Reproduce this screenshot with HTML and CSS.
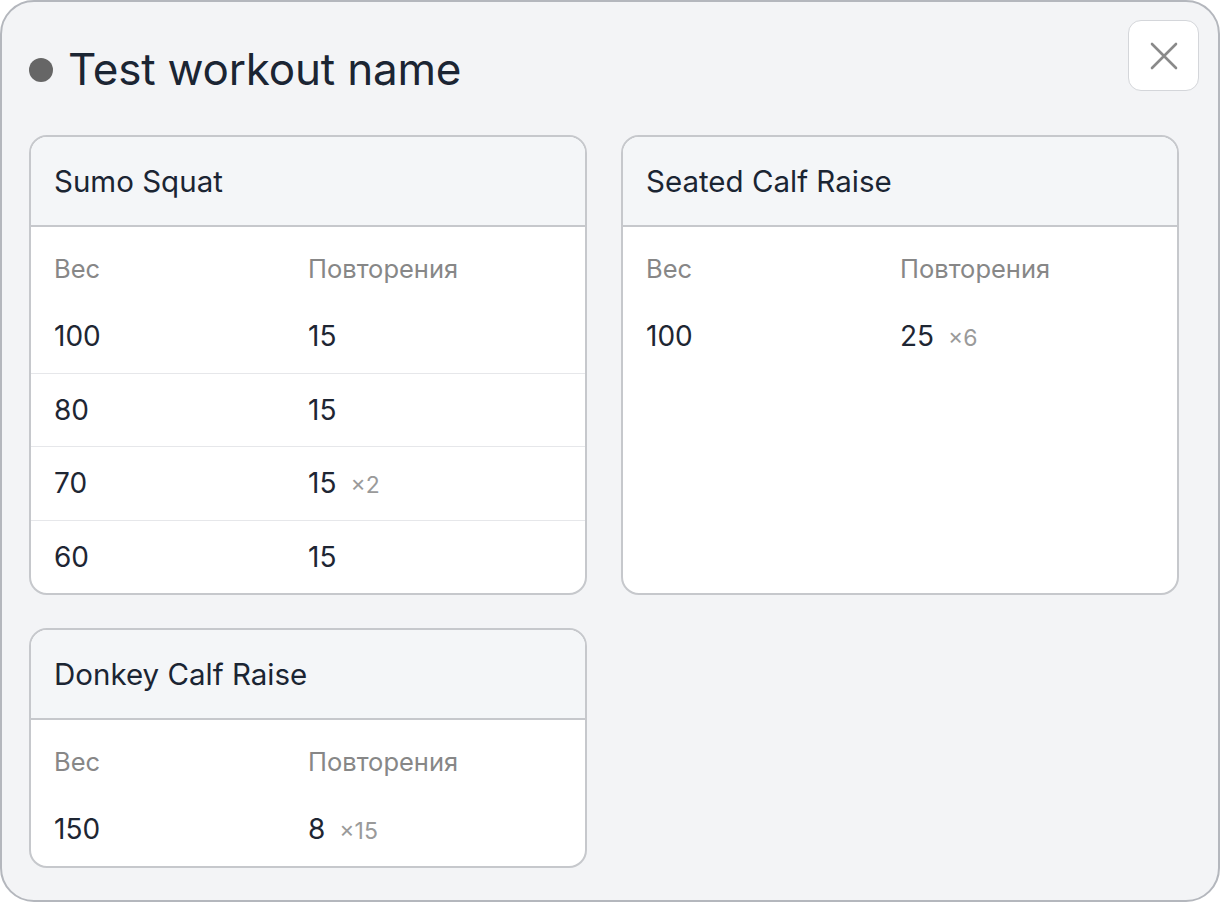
FILE: index.html
```html
<!DOCTYPE html>
<html lang="ru">
<head>
<meta charset="utf-8">
<title>Test workout name</title>
<link rel="stylesheet" href="styles.css">
</head>
<body>
<div class="modal">
  <div class="modal-head">
    <h1 class="title"><span class="dot"></span>Test workout name</h1>
    <button class="close" aria-label="Закрыть">
      <svg width="28" height="28" viewBox="0 0 28 28"><path d="M2 2 L26 26 M26 2 L2 26" stroke="#8a8a8a" stroke-width="2.6" stroke-linecap="round" fill="none"/></svg>
    </button>
  </div>
  <div class="grid">
    <section class="card">
      <div class="card-head">Sumo Squat</div>
      <div class="row row-head"><span>Вес</span><span>Повторения</span></div>
      <div class="row"><span>100</span><span>15</span></div>
      <div class="row"><span>80</span><span>15</span></div>
      <div class="row"><span>70</span><span>15<em class="mult">×2</em></span></div>
      <div class="row"><span>60</span><span>15</span></div>
    </section>
    <section class="card">
      <div class="card-head">Seated Calf Raise</div>
      <div class="row row-head"><span>Вес</span><span>Повторения</span></div>
      <div class="row"><span>100</span><span>25<em class="mult">×6</em></span></div>
    </section>
    <section class="card">
      <div class="card-head">Donkey Calf Raise</div>
      <div class="row row-head"><span>Вес</span><span>Повторения</span></div>
      <div class="row"><span>150</span><span>8<em class="mult">×15</em></span></div>
    </section>
  </div>
</div>
</body>
</html>
```

FILE: styles.css
```css
html, body {
  margin: 0;
  padding: 0;
  background: #ffffff;
}
body {
  font-family: Inter, "Noto Sans", sans-serif;
  color: #1b2533;
}
.modal {
  box-sizing: border-box;
  width: 1220px;
  height: 902px;
  background: #f3f4f6;
  border: 2px solid #b4b7bd;
  border-radius: 34px;
  padding: 18px 19px 0 27px;
}
.modal-head {
  display: flex;
  justify-content: space-between;
  align-items: flex-start;
  height: 115px;
}
.title {
  margin: 25px 0 0 0;
  display: flex;
  align-items: center;
  font-size: 44px;
  font-weight: 400;
  letter-spacing: -0.2px;
  line-height: 48px;
  color: #1b2533;
}
.dot {
  width: 24px;
  height: 24px;
  border-radius: 50%;
  background: #666666;
  margin-right: 15px;
  margin-top: 2px;
}
.close {
  box-sizing: border-box;
  width: 71px;
  height: 71px;
  border-radius: 13px;
  border: 1.5px solid #d4d6da;
  background: #ffffff;
  display: flex;
  align-items: center;
  justify-content: center;
  padding: 0;
}
.grid {
  display: grid;
  grid-template-columns: 558px 558px;
  column-gap: 34px;
  row-gap: 33px;
  align-items: stretch;
}
.card {
  box-sizing: border-box;
  background: #ffffff;
  border: 2px solid #c6c8cc;
  border-radius: 18px;
  overflow: hidden;
}
.card-head {
  box-sizing: border-box;
  height: 90px;
  background: #f4f6f8;
  border-bottom: 2px solid #c6c8cc;
  padding-left: 23px;
  display: flex;
  align-items: center;
  font-size: 29.5px;
  font-weight: 400;
  color: #1b2533;
}
.row {
  box-sizing: border-box;
  display: grid;
  grid-template-columns: 254px 1fr;
  align-items: center;
  height: 73.5px;
  padding-left: 23px;
  font-size: 28px;
  color: #1e2633;
}
.row + .row + .row {
  border-top: 1.5px solid #e6e7ea;
}
.row-head {
  height: 72px;
  padding-top: 10px;
  font-size: 25.5px;
  color: #878787;
}
.mult {
  font-style: normal;
  font-size: 23px;
  color: #9a9a9a;
  margin-left: 14px;
}
```
